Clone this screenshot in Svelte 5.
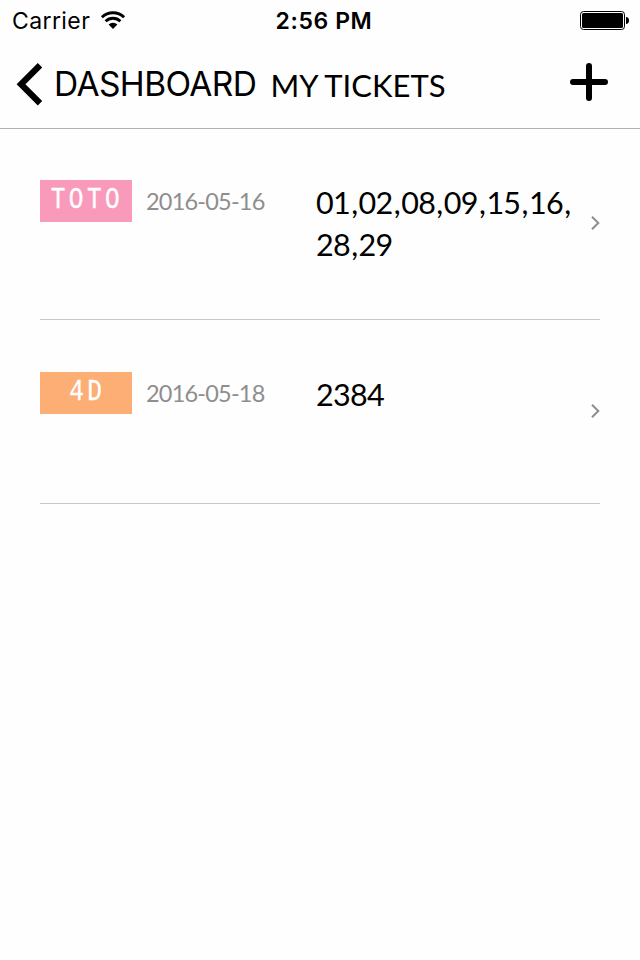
<script lang="ts">
  type Ticket = { id: number; game: string; date: string; numbers: string[] };

  const time = '2:56 PM';

  const tickets: Ticket[] = [
    { id: 1, game: 'TOTO', date: '2016-05-16', numbers: ['01', '02', '08', '09', '15', '16', '28', '29'] },
    { id: 2, game: '4D', date: '2016-05-18', numbers: ['2384'] }
  ];
</script>

<div class="screen">
  <div class="status">
    <div class="carrier">
      <span>Carrier</span>
      <svg width="26" height="20" viewBox="0 0 26 20" fill="none" stroke="#000" stroke-width="2.8">
        <path d="M1.9 7.3a15.8 15.8 0 0 1 22.2 0" />
        <path d="M5.6 11.3a10.5 10.5 0 0 1 14.8 0" />
        <path d="M13 18.9l-4.4-4.4a6.2 6.2 0 0 1 8.8 0z" fill="#000" stroke="none" />
      </svg>
    </div>
    <span class="time">{time}</span>
    <svg class="battery" width="50" height="20" viewBox="0 0 50 20">
      <rect x="0.5" y="1.5" width="44" height="18" rx="3" fill="none" stroke="#000" />
      <rect x="2" y="3" width="41" height="15" rx="1.6" />
      <path d="M46 7c2 0 3 1.4 3 3.5s-1 3.5-3 3.5z" />
    </svg>
  </div>

  <header class="nav">
    <button type="button" class="back">
      <svg width="28" height="44" viewBox="0 0 28 44" fill="none" stroke="#000" stroke-width="6.2">
        <path d="M24 3.2L5 22.2l19 19" />
      </svg>
      <span>DASHBOARD</span>
    </button>
    <h1>MY TICKETS</h1>
    <button type="button" class="add" aria-label="Add ticket">
      <svg width="38" height="38" viewBox="0 0 38 38" stroke="#000" stroke-width="6" stroke-linecap="round">
        <path d="M19 3v32M3 19h32" />
      </svg>
    </button>
  </header>

  <ul class="tickets">
    {#each tickets as t (t.id)}
      <li>
        <span class="badge" class:toto={t.game === 'TOTO'}><span>{t.game}</span></span>
        <span class="date">{t.date}</span>
        <span class="numbers">
          {#each t.numbers as n, i}
            <span>{n}{#if i < t.numbers.length - 1}<span class="comma">,</span>{/if}</span>
          {/each}
        </span>
        <svg class="chevron" width="10" height="16" viewBox="0 0 10 16" fill="none" stroke="#8e8e8e" stroke-width="2">
          <path d="M2 1.7L8.3 8 2 14.3" />
        </svg>
      </li>
    {/each}
  </ul>
</div>

<style>
  :global(body) { background: #fefefe; }
  .screen { width: 640px; height: 960px; overflow: hidden; background: #fefefe; color: #000; font-family: Lato, "Open Sans", sans-serif; }
  .status { display: grid; grid-template-columns: 1fr auto 1fr; align-items: center; height: 40px; padding: 0 10px 0 12px; box-sizing: border-box; font-family: Inter, sans-serif; font-size: 23px; line-height: 38px; }
  .status span { padding-top: 2px; }
  .carrier { display: flex; align-items: center; gap: 10px; letter-spacing: 0.4px; }
  .status .time { padding-left: 6px; font-weight: 600; letter-spacing: 0.6px; }
  .battery { justify-self: end; }
  .nav { display: flex; align-items: center; height: 89px; padding: 0 32px 0 16px; box-sizing: border-box; border-bottom: 1px solid #b2b2b2; }
  button { padding: 0; border: none; background: none; color: inherit; cursor: pointer; }
  .back { display: flex; align-items: center; gap: 10px; font-family: Inter, sans-serif; font-size: 33.5px; line-height: 44px; letter-spacing: -0.6px; }
  h1 { margin: 0 auto 0 14px; padding-top: 2px; font-size: 31px; line-height: 44px; font-weight: 400; }
  .add { display: flex; margin-bottom: 5px; }
  .tickets { margin: 0; padding: 0 40px; list-style: none; }
  li { display: grid; grid-template-columns: 92px 156px 260px 1fr; column-gap: 14px; align-items: start; height: 184px; padding-top: 52px; box-sizing: border-box; border-bottom: 1px solid #c8c8c8; }
  li:first-child { height: 191px; padding-top: 51px; }
  .badge { display: flex; justify-content: center; height: 42px; background: #fdae74; color: #fff; font-family: "Liberation Mono", monospace; font-size: 29px; line-height: 41px; letter-spacing: 4.2px; text-indent: 3px; }
  .badge span { transform: scaleX(0.84); -webkit-text-stroke: 0.4px #fff; }
  .badge.toto { background: #f99aba; }
  .date { color: #8e8e8e; font-size: 23.5px; line-height: 42px; letter-spacing: -0.8px; }
  .numbers { display: flex; flex-wrap: wrap; font-size: 30.5px; line-height: 42px; letter-spacing: -0.7px; padding-top: 1px; }
  .comma { padding: 0 1.2px; }
  .chevron { justify-self: end; margin-top: 31px; }
  li:first-child .chevron { margin-top: 35px; }
</style>
